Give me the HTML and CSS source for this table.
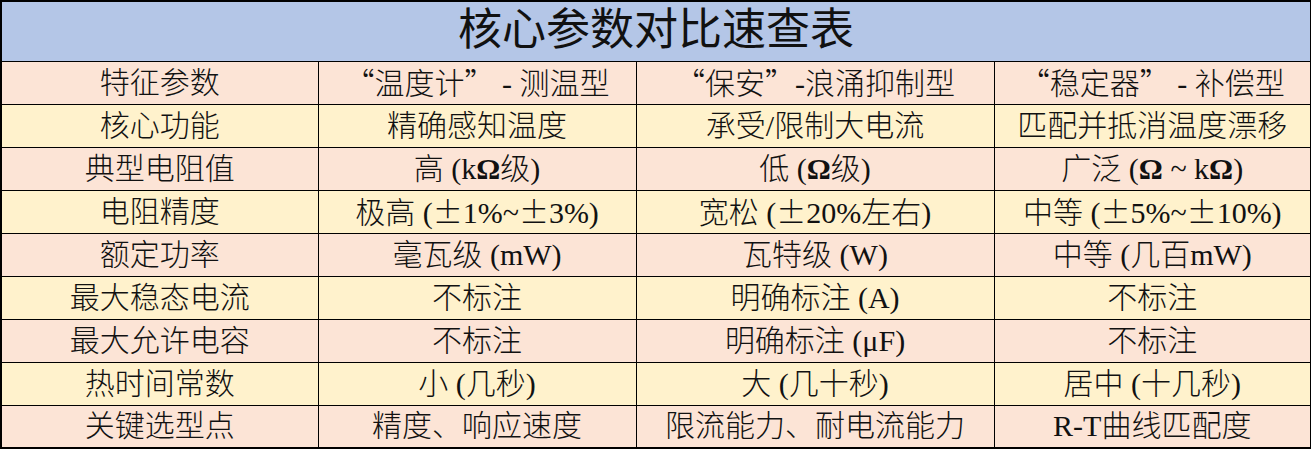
FILE: index.html
```html
<!DOCTYPE html>
<html lang="zh-CN">
<head>
<meta charset="utf-8">
<title>核心参数对比速查表</title>
<link rel="stylesheet" href="styles.css">
</head>
<body>
<table class="sheet">
  <colgroup>
    <col class="c1"><col class="c2"><col class="c3"><col class="c4">
  </colgroup>
  <tr class="title"><td colspan="4">核心参数对比速查表</td></tr>
  <tr class="pink"><td>特征参数</td><td><span class="cjk">“</span>温度计<span class="cjk">”</span> - 测温型</td><td><span class="cjk">“</span>保安<span class="cjk">”</span>-浪涌抑制型</td><td><span class="cjk">“</span>稳定器<span class="cjk">”</span> - 补偿型</td></tr>
  <tr class="yellow"><td>核心功能</td><td>精确感知温度</td><td>承受/限制大电流</td><td>匹配并抵消温度漂移</td></tr>
  <tr class="pink"><td>典型电阻值</td><td>高 (k<b>Ω</b>级)</td><td>低 (<b>Ω</b>级)</td><td>广泛 (<b>Ω</b> ~ k<b>Ω</b>)</td></tr>
  <tr class="yellow"><td>电阻精度</td><td>极高 (<span class="pm">±</span>1%~<span class="pm">±</span>3%)</td><td>宽松 (<span class="pm">±</span>20%左右)</td><td>中等 (<span class="pm">±</span>5%~<span class="pm">±</span>10%)</td></tr>
  <tr class="pink"><td>额定功率</td><td>毫瓦级 (mW)</td><td>瓦特级 (W)</td><td>中等 (几百mW)</td></tr>
  <tr class="yellow"><td>最大稳态电流</td><td>不标注</td><td>明确标注 (A)</td><td>不标注</td></tr>
  <tr class="pink"><td>最大允许电容</td><td>不标注</td><td>明确标注 (μF)</td><td>不标注</td></tr>
  <tr class="yellow"><td>热时间常数</td><td>小 (几秒)</td><td>大 (几十秒)</td><td>居中 (十几秒)</td></tr>
  <tr class="pink"><td>关键选型点</td><td>精度、响应速度</td><td>限流能力、耐电流能力</td><td>R-T曲线匹配度</td></tr>
</table>
</body>
</html>
```

FILE: styles.css
```css
html, body {
  margin: 0;
  padding: 0;
  background: #ffffff;
}

.sheet {
  border-collapse: collapse;
  table-layout: fixed;
  width: 1310px;
  border: 2px solid #000;
  font-family: "Liberation Serif", "Noto Sans CJK SC", serif;
  font-weight: 300;
  color: #111;
}

.c1 { width: 317px; }
.c2 { width: 318px; }
.c3 { width: 358px; }
.c4 { width: 317px; }

.sheet td {
  border: 1px solid #000;
  text-align: center;
  vertical-align: middle;
  padding: 0;
  font-size: 30px;
  line-height: 30px;
  white-space: nowrap;
}

.sheet tr {
  height: 43px;
}

.sheet tr.title {
  height: 60px;
}

.title td {
  background: #b4c6e7;
  font-size: 44px;
  line-height: 50px;
  font-weight: 400;
}

.pink td {
  background: #fce4d6;
}

.yellow td {
  background: #fff2cc;
}

.cjk {
  font-family: "Noto Sans CJK SC", sans-serif;
}

.pm {
  font-family: "Noto Sans CJK SC", sans-serif;
}

b {
  font-weight: 700;
}
```
